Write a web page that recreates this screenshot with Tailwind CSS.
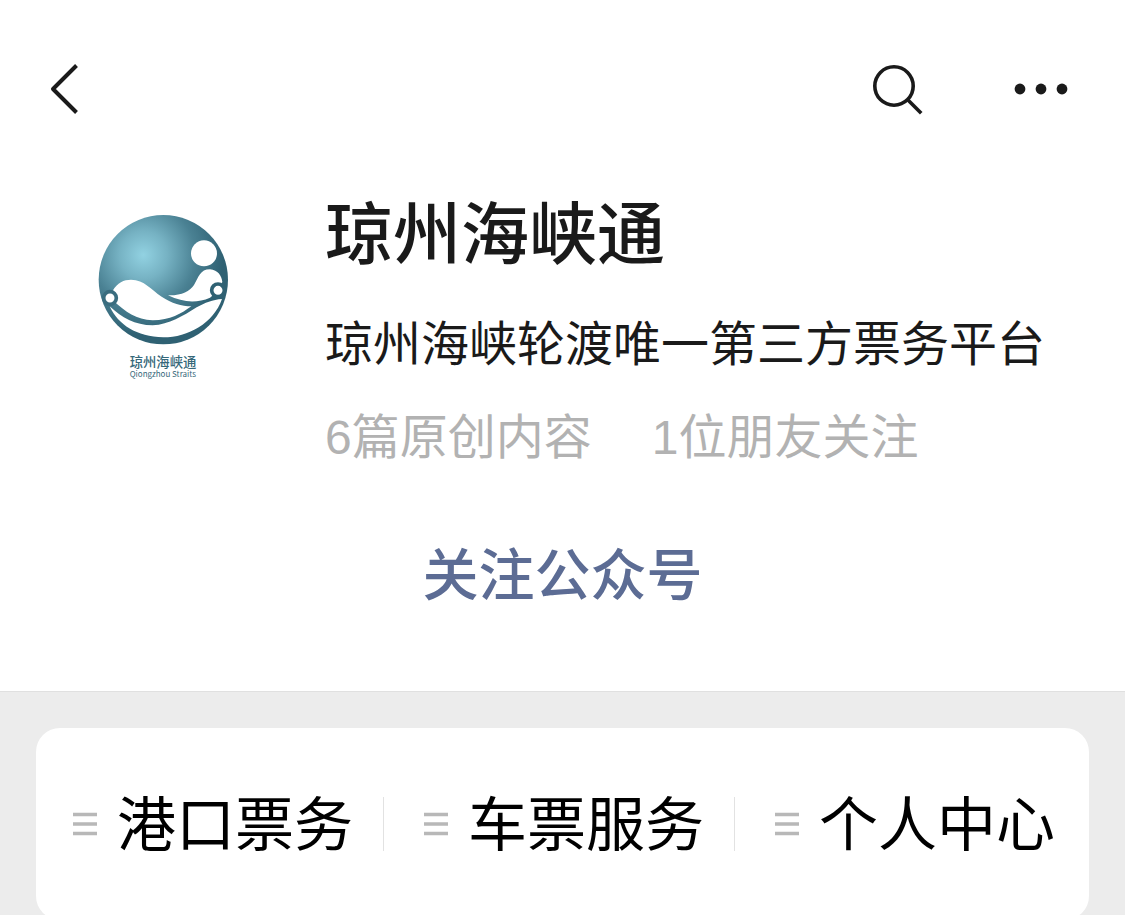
<!DOCTYPE html>
<html lang="zh-CN">

<head>
    <meta charset="UTF-8" />
    <meta name="viewport" content="width=device-width, initial-scale=1.0" />
    <title>琼州海峡通</title>
    <script src="https://cdn.jsdelivr.net/npm/@tailwindcss/browser@4"></script>
</head>

<body class="min-h-screen bg-[#ececec] font-['Noto_Sans_CJK_SC',sans-serif] text-[#1a1a1a]">

    <div class="bg-white border-b border-[#e0e0e0]">
        <!-- Top bar -->
        <header class="flex items-center pt-[60px] pl-12 pr-[54px]">
            <button type="button" aria-label="返回">
                <svg class="w-8 h-[58px]" viewBox="0 0 32 58" fill="none" stroke="currentColor" stroke-width="4" stroke-linejoin="round">
                    <path d="M28.500 5.500L5 29l23.500 23.500" />
                </svg>
            </button>
            <button type="button" aria-label="搜索" class="ml-auto">
                <svg class="w-[58px] h-[58px]" viewBox="0 0 58 58" fill="none" stroke="currentColor" stroke-width="3.600">
                    <circle cx="27" cy="26" r="19.200" />
                    <path d="M41 40l13.200 13.200" />
                </svg>
            </button>
            <button type="button" aria-label="更多" class="ml-[86px]">
                <svg class="w-[60px] h-[58px]" viewBox="0 0 60 58" fill="currentColor">
                    <circle cx="9" cy="29" r="5.400" />
                    <circle cx="30" cy="29" r="5.400" />
                    <circle cx="51" cy="29" r="5.400" />
                </svg>
            </button>
        </header>

        <!-- Account profile -->
        <section class="flex items-start pl-20 pr-8 pt-[62px]">
            <svg class="w-[170px] h-[190px] mt-5 shrink-0" viewBox="0 0 510 570" role="img" aria-label="琼州海峡通 Qiongzhou Straits">
                <defs>
                    <radialGradient id="sea" gradientUnits="userSpaceOnUse" cx="190" cy="165" r="240">
                        <stop offset="0" stop-color="#92d2e2" />
                        <stop offset="0.300" stop-color="#76b2c3" />
                        <stop offset="0.650" stop-color="#4a8193" />
                        <stop offset="1" stop-color="#2f6173" />
                    </radialGradient>
                </defs>
                <circle cx="250" cy="239" r="194" fill="url(#sea)" />
                <g fill="#fff">
                    <circle cx="372" cy="160" r="39" />
                    <path d="M98 272C112 248 132 239 153 239C194 240 212 268 245 290C275 310 305 318 334 319C305 340 270 361 218 361C170 360 134 333 104 306Z" />
                    <path d="M264 286C306 287 328 274 342 255C356 232 360 208 390 208C414 210 425 228 427 246L414 272L390 293C350 310 310 308 264 286Z" />
                    <path d="M89 319C125 353 165 376 218 376C268 374 308 348 350 322C375 308 398 299 426 297C400 370 325 412 250 412C170 410 115 375 89 319Z" />
                </g>
                <circle cx="90" cy="294" r="19" fill="#fff" stroke="#3a6d7f" stroke-width="11" />
                <circle cx="414" cy="271" r="19" fill="#fff" stroke="#2f6173" stroke-width="11" />
                <text x="149" y="502" font-size="40" font-weight="500" fill="#36687a">琼州海峡通</text>
                <text x="149" y="532" font-size="24" fill="#36687a">Qiongzhou Straits</text>
            </svg>
            <div class="ml-[75px] min-w-0 whitespace-nowrap">
                <h1 class="text-[68px] leading-[100px] font-medium">琼州海峡通</h1>
                <p class="mt-3 text-[48px] leading-[96px]">琼州海峡轮渡唯一第三方票务平台</p>
                <p class="mt-1 flex gap-[60px] text-[48px] leading-[92px] font-['Liberation_Sans','Noto_Sans_CJK_SC',sans-serif] text-[#b2b2b2]">
                    <span>6篇原创内容</span>
                    <span>1位朋友关注</span>
                </p>
            </div>
        </section>

        <div class="flex justify-center pt-[45px] pb-[78px]">
            <button type="button" class="text-[56px] leading-[84px] font-medium text-[#5c6c94]">关注公众号</button>
        </div>
    </div>

    <!-- Menu -->
    <nav class="px-9 pt-9 pb-9">
        <ul class="grid grid-cols-3 h-48 items-center rounded-3xl bg-white text-[59px] leading-[88px] text-black whitespace-nowrap">
            <li class="flex items-center pl-[37px] pr-[3px]">
                <a href="#" class="flex items-center gap-5">
                    <svg class="w-6 h-6" viewBox="0 0 24 24" stroke="#b8b8b8" stroke-width="3.600"><path d="M0 2.500h24M0 12h24M0 21.500h24" /></svg>
                    <span class="pb-1.5">港口票务</span>
                </a>
                <span class="ml-auto w-px h-[54px] bg-[#e2e2e2]"></span>
            </li>
            <li class="flex items-center pl-[37px] pr-[3px]">
                <a href="#" class="flex items-center gap-5">
                    <svg class="w-6 h-6" viewBox="0 0 24 24" stroke="#b8b8b8" stroke-width="3.600"><path d="M0 2.500h24M0 12h24M0 21.500h24" /></svg>
                    <span class="pb-1.5">车票服务</span>
                </a>
                <span class="ml-auto w-px h-[54px] bg-[#e2e2e2]"></span>
            </li>
            <li class="flex items-center pl-[37px] pr-[3px]">
                <a href="#" class="flex items-center gap-5">
                    <svg class="w-6 h-6" viewBox="0 0 24 24" stroke="#b8b8b8" stroke-width="3.600"><path d="M0 2.500h24M0 12h24M0 21.500h24" /></svg>
                    <span class="pb-1.5">个人中心</span>
                </a>
            </li>
        </ul>
    </nav>

</body>

</html>
